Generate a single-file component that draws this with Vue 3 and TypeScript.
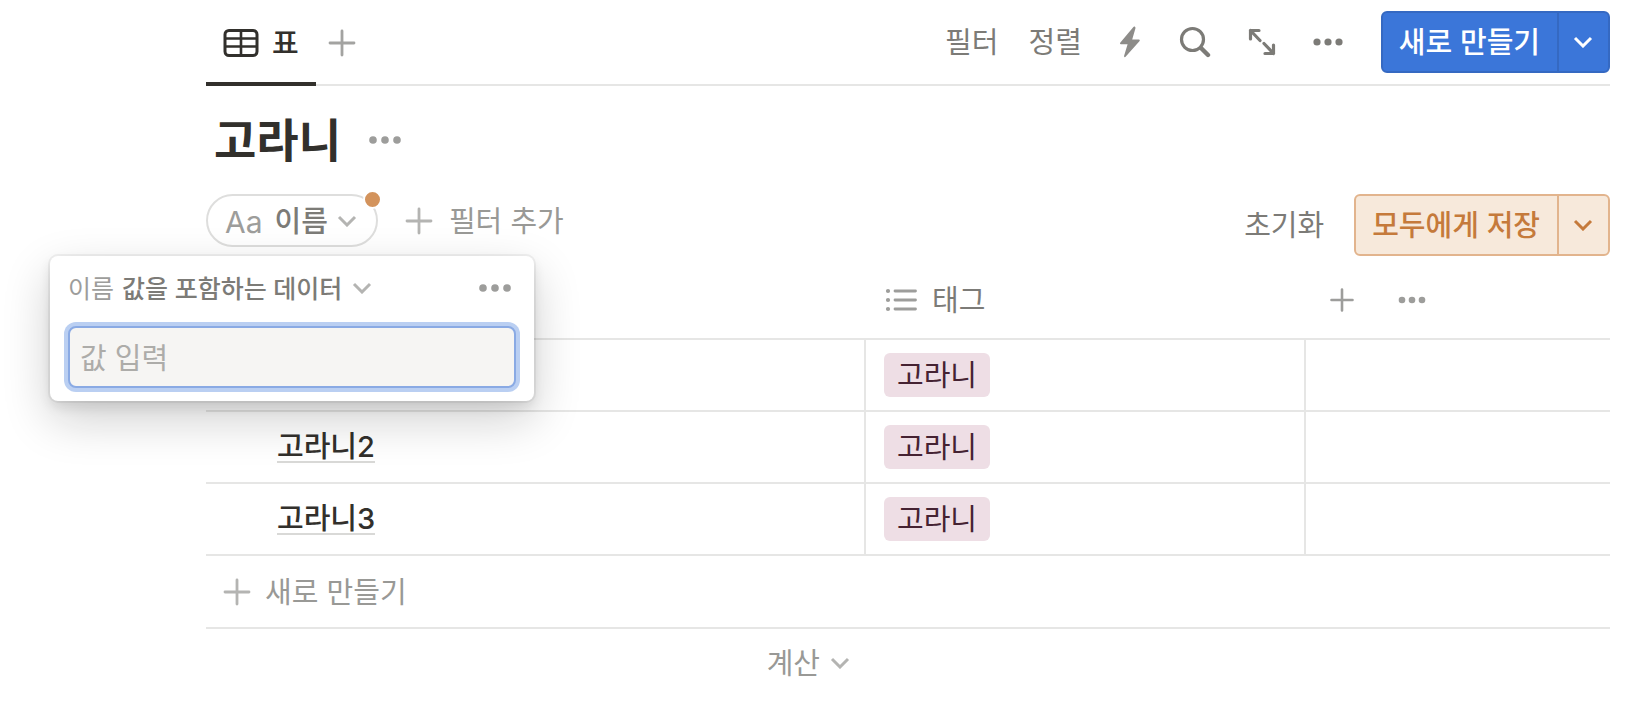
<script setup lang="ts">
import { ref } from 'vue'

interface Row {
  id: number
  name: string
  tag: string
}

const filterValue = ref('')

const rows: Row[] = [
  { id: 1, name: '', tag: '고라니' },
  { id: 2, name: '고라니2', tag: '고라니' },
  { id: 3, name: '고라니3', tag: '고라니' },
]
</script>

<template>
  <main class="page">
    <header class="topbar">
      <nav class="tabs">
        <button class="tab" type="button">
          <svg width="36" height="30" viewBox="0 0 36 30" fill="none" stroke="currentColor">
            <rect x="2" y="2.5" width="32" height="25" rx="4" stroke-width="3" />
            <path d="M18 3v24M3 10.5h30M3 18.5h30" stroke-width="2.6" />
          </svg>
          <span>표</span>
        </button>
        <button class="icon add-view" type="button" aria-label="보기 추가">
          <svg width="28" height="28" viewBox="0 0 28 28" fill="none" stroke="currentColor" stroke-width="2.8" stroke-linecap="round">
            <path d="M14 2v24M2 14h24" />
          </svg>
        </button>
      </nav>
      <div class="tools">
        <button class="text-tool" type="button"><span>필터</span></button>
        <button class="text-tool" type="button"><span>정렬</span></button>
        <button class="icon bolt" type="button" aria-label="자동화">
          <svg width="23" height="32" viewBox="0 0 23 32" fill="currentColor">
            <path d="M14.2 1.2 1.4 16.6c-.7.9-.4 1.6.5 1.6h6.7L5.2 29.6c-.5 1.6.7 2.1 1.6 1L20.4 15.3c.7-.9.4-1.7-.5-1.7h-6.7L16.4 2.5c.4-1.5-1.1-2.6-2.2-1.3Z" />
          </svg>
        </button>
        <button class="icon" type="button" aria-label="검색">
          <svg width="32" height="32" viewBox="0 0 32 32" fill="none" stroke="currentColor" stroke-linecap="round">
            <circle cx="13.5" cy="13.5" r="11" stroke-width="3.2" />
            <path d="m22 22 7 7" stroke-width="4.4" />
          </svg>
        </button>
        <button class="icon" type="button" aria-label="전체 화면">
          <svg width="28" height="28" viewBox="0 0 28 28" fill="none" stroke="currentColor" stroke-width="3.2" stroke-linecap="round" stroke-linejoin="round">
            <path d="M2.5 11V2.5H11M2.5 2.5l9.500 10M17 25.500h8.500V17M25.500 25.500l-9.500-10" />
          </svg>
        </button>
        <button class="icon" type="button" aria-label="더 보기">
          <svg width="31" height="10" viewBox="0 0 31 10" fill="currentColor">
            <circle cx="4" cy="5" r="3.6" /><circle cx="15" cy="5" r="3.6" /><circle cx="26" cy="5" r="3.6" />
          </svg>
        </button>
        <div class="split primary">
          <button class="main" type="button"><span>새로 만들기</span></button>
          <button class="more" type="button" aria-label="새로 만들기 옵션">
            <svg class="chevron" viewBox="0 0 20 12"><path d="m2 2 8 8 8-8" /></svg>
          </button>
        </div>
      </div>
    </header>

    <div class="title-row">
      <h1>고라니</h1>
      <button class="icon faint" type="button" aria-label="데이터베이스 메뉴">
        <svg width="34" height="10" viewBox="0 0 34 10" fill="currentColor">
          <circle cx="5" cy="5" r="3.8" /><circle cx="17" cy="5" r="3.8" /><circle cx="29" cy="5" r="3.8" />
        </svg>
      </button>
    </div>

    <div class="filter-row">
      <div class="filters">
        <div class="chip-wrap">
          <button class="chip" type="button">
            <span class="type">Aa</span>
            <span class="name">이름</span>
            <svg class="chevron" viewBox="0 0 20 12"><path d="m2 2 8 8 8-8" /></svg>
          </button>
          <span class="badge"></span>

          <section class="popover" aria-label="이름 필터">
            <div class="popover-head">
              <span class="property">이름</span>
              <button class="condition" type="button">
                <span>값을 포함하는 데이터</span>
                <svg class="chevron" viewBox="0 0 20 12"><path d="m2 2 8 8 8-8" /></svg>
              </button>
              <button class="icon faint" type="button" aria-label="필터 메뉴">
                <svg width="34" height="10" viewBox="0 0 34 10" fill="currentColor">
                  <circle cx="5" cy="5" r="3.8" /><circle cx="17" cy="5" r="3.8" /><circle cx="29" cy="5" r="3.8" />
                </svg>
              </button>
            </div>
            <input v-model="filterValue" type="text" placeholder="값 입력" aria-label="값 입력" />
          </section>
        </div>
        <button class="add-filter" type="button">
          <svg width="28" height="28" viewBox="0 0 28 28" fill="none" stroke="#b4b4b2" stroke-width="2.8" stroke-linecap="round">
            <path d="M14 2v24M2 14h24" />
          </svg>
          <span>필터 추가</span>
        </button>
      </div>
      <div class="save">
        <button class="reset" type="button"><span>초기화</span></button>
        <div class="split warn">
          <button class="main" type="button"><span>모두에게 저장</span></button>
          <button class="more" type="button" aria-label="저장 옵션">
            <svg class="chevron" viewBox="0 0 20 12"><path d="m2 2 8 8 8-8" /></svg>
          </button>
        </div>
      </div>
    </div>

    <table>
      <colgroup>
        <col class="col-name" />
        <col class="col-tag" />
        <col />
      </colgroup>
      <thead>
        <tr>
          <th></th>
          <th>
            <div class="head">
              <svg width="34" height="26" viewBox="0 0 34 26" fill="none" stroke="#9d9d9b" stroke-width="2.8" stroke-linecap="round">
                <path d="M11 4h20.5M11 13h20.5M11 22h20.5" />
                <path d="M4 4h.01M4 13h.01M4 22h.01" stroke-width="4.2" />
              </svg>
              <span>태그</span>
            </div>
          </th>
          <th>
            <div class="head actions">
              <button class="icon faint" type="button" aria-label="속성 추가">
                <svg width="24" height="24" viewBox="0 0 24 24" fill="none" stroke="currentColor" stroke-width="2.6" stroke-linecap="round">
                  <path d="M12 1.5v21M1.5 12h21" />
                </svg>
              </button>
              <button class="icon faint" type="button" aria-label="속성 메뉴">
                <svg width="28" height="8" viewBox="0 0 28 8" fill="currentColor">
                  <circle cx="4" cy="4" r="3.3" /><circle cx="14" cy="4" r="3.3" /><circle cx="24" cy="4" r="3.3" />
                </svg>
              </button>
            </div>
          </th>
        </tr>
      </thead>
      <tbody>
        <tr v-for="row in rows" :key="row.id">
          <td class="name-cell"><a v-if="row.name" href="#">{{ row.name }}</a></td>
          <td class="tag-cell"><span class="tag">{{ row.tag }}</span></td>
          <td></td>
        </tr>
      </tbody>
    </table>

    <button class="new-row" type="button">
      <svg width="28" height="28" viewBox="0 0 28 28" fill="none" stroke="#b4b4b2" stroke-width="2.8" stroke-linecap="round">
        <path d="M14 2v24M2 14h24" />
      </svg>
      <span>새로 만들기</span>
    </button>

    <button class="calculate" type="button">
      <span>계산</span>
      <svg class="chevron" viewBox="0 0 20 12"><path d="m2 2 8 8 8-8" /></svg>
    </button>
  </main>
</template>

<style>
body {
  background: #fff;
}
</style>

<style scoped>
* {
  box-sizing: border-box;
}

.page {
  padding: 0 38px 0 206px;
  color: #32302c;
  font-family: Inter, 'Noto Sans CJK KR', sans-serif;
  font-size: 29px;
  line-height: 40px;
}

button {
  display: flex;
  align-items: center;
  padding: 0;
  border: 0;
  background: none;
  color: inherit;
  font: inherit;
  white-space: nowrap;
  cursor: pointer;
}

/* Hangul glyphs ride high in the Latin line box */
button > span,
.head > span {
  padding-top: 2px;
}

svg {
  display: block;
  flex: none;
}

.chevron {
  width: 20px;
  height: 12px;
  fill: none;
  stroke: currentColor;
  stroke-width: 3;
}

.faint {
  color: #9d9d9b;
}

.topbar {
  display: flex;
  justify-content: space-between;
  height: 86px;
  border-bottom: 2px solid #e6e6e5;
}

.tabs {
  display: flex;
  height: 86px;
}

.tab {
  gap: 13px;
  padding: 4px 17px 0;
  border-bottom: 4px solid #32302c;
  font-weight: 500;
}

.add-view {
  margin-left: 12px;
  color: #a3a3a1;
}

.tools {
  display: flex;
  align-items: center;
  gap: 37px;
  color: #7c7b77;
}

.text-tool + .text-tool {
  margin-left: -7px;
}

.bolt {
  color: #8d8c89;
}

.split {
  display: flex;
  height: 62px;
  border-radius: 6px;
  border: 2px solid;
  font-weight: 500;
}

.split .main {
  padding: 0 17px 0 16px;
}

.split .more {
  justify-content: center;
  width: 51px;
  padding-right: 2px;
  border-left: 2px solid;
  border-color: inherit;
}

.primary {
  border-color: #3569c2;
  background: #3b76d9;
  color: #fff;
}

.warn {
  border-color: #e2b48d;
  background: #f7e9db;
  color: #c57a3b;
}

.title-row {
  display: flex;
  align-items: center;
  gap: 27px;
  height: 108px;
  padding-left: 8px;
}

h1 {
  margin: 0;
  font-size: 46px;
  font-weight: 700;
  line-height: 60px;
}

.filter-row {
  display: flex;
  justify-content: space-between;
  align-items: flex-start;
}

.filters,
.save {
  display: flex;
  align-items: center;
}

.chip-wrap {
  position: relative;
}

.chip {
  height: 53px;
  padding: 0 19px 0 17px;
  border: 2px solid #dededd;
  border-radius: 27px;
}

.chip .type {
  color: #9d9d9b;
  font-size: 30px;
}

.chip .name {
  margin: 0 9px 0 12px;
  color: #7c7b77;
  font-weight: 500;
}

.chip .chevron {
  color: #b4b4b2;
}

.badge {
  position: absolute;
  top: -4px;
  right: -4px;
  width: 19px;
  height: 19px;
  border: 2px solid #fff;
  border-radius: 50%;
  background: #d3935c;
}

.popover {
  position: absolute;
  z-index: 1;
  top: 62px;
  left: -156px;
  width: 484px;
  padding: 12px 18px 13px;
  border-radius: 8px;
  background: #fff;
  box-shadow:
    0 0 0 2px rgba(15, 15, 15, 0.05),
    0 6px 12px rgba(15, 15, 15, 0.1),
    0 18px 48px rgba(15, 15, 15, 0.2);
}

.popover-head {
  display: flex;
  align-items: center;
  height: 40px;
  margin-bottom: 18px;
  font-size: 25px;
}

.property {
  margin-right: 8px;
  padding-top: 2px;
  color: #9d9d9b;
}

.condition {
  gap: 10px;
  margin-right: auto;
  color: #7c7b77;
  font-weight: 500;
}

.condition .chevron {
  color: #b4b4b2;
}

.popover-head .icon {
  margin-right: 4px;
}

input {
  display: block;
  width: 100%;
  height: 62px;
  padding: 2px 10px 0;
  border: 2px solid #8aaae4;
  border-radius: 8px;
  outline: 0;
  background: #f6f5f3;
  box-shadow: 0 0 0 4px #bacff2;
  color: #32302c;
  font: inherit;
}

input::placeholder {
  color: #adaca9;
  opacity: 1;
}

.add-filter {
  gap: 16px;
  margin-left: 27px;
  color: #999996;
}

.save {
  gap: 30px;
}

.reset {
  color: #7c7b77;
}

table {
  width: 100%;
  margin-top: 6px;
  border-collapse: separate;
  border-spacing: 0;
  table-layout: fixed;
}

.col-name {
  width: 660px;
}

.col-tag {
  width: 440px;
}

th,
td {
  height: 72px;
  padding: 0;
  border-bottom: 2px solid #e6e6e5;
}

th {
  height: 78px;
  color: #7c7b77;
  font-weight: 400;
}

td:not(:last-child) {
  border-right: 2px solid #e6e6e5;
}

.head {
  display: flex;
  align-items: center;
  gap: 14px;
  padding-left: 18px;
}

.actions {
  gap: 44px;
  padding-left: 24px;
}

.name-cell {
  padding-left: 71px;
}

.name-cell a {
  display: block;
  width: fit-content;
  padding-top: 2px;
  border-bottom: 2px solid #d9d9d7;
  color: inherit;
  font-weight: 500;
  line-height: 28px;
  text-decoration: none;
}

.tag-cell {
  padding-left: 18px;
}

.tag {
  display: block;
  width: fit-content;
  padding: 3px 13px 1px;
  border-radius: 6px;
  background: #eedee5;
  color: #452232;
}

.new-row {
  gap: 14px;
  width: 100%;
  height: 73px;
  padding-left: 17px;
  border-bottom: 2px solid #e6e6e5;
  color: #999996;
}

.calculate {
  justify-content: flex-end;
  gap: 10px;
  width: 660px;
  height: 68px;
  padding-right: 16px;
  color: #999996;
}

.calculate .chevron {
  color: #b4b4b2;
}
</style>
